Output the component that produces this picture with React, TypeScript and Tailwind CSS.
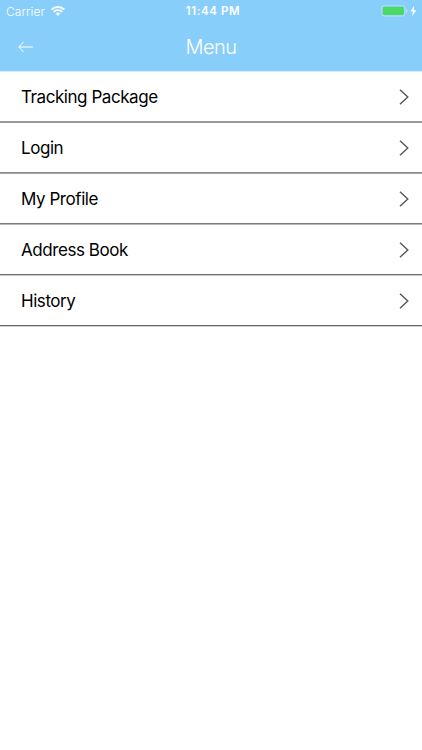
type MenuItem = {
  label: string
  lineClass: string
}

const MENU_ITEMS: MenuItem[] = [
  { label: 'Tracking Package', lineClass: 'border-[#999] shadow-[0_1px_0_#999]' },
  { label: 'Login', lineClass: 'border-[#8c8c8c] shadow-[0_1px_0_#a6a6a6]' },
  { label: 'My Profile', lineClass: 'border-[#7c7c7c] shadow-[0_1px_0_#b8b8b8]' },
  { label: 'Address Book', lineClass: 'border-[#707070] shadow-[0_1px_0_#c8c8c8]' },
  { label: 'History', lineClass: 'border-[#666] shadow-[0_1px_0_#d2d2d2]' }
]

function WifiIcon() {
  return (
    <svg className="ml-[6px] h-[10px] w-[14px]" viewBox="0 0 14 10" fill="none" stroke="white">
      <path d="M.7 3.6a9.2 9.2 0 0 1 12.6 0" strokeWidth="2" />
      <path d="M2.8 5.9a6 6 0 0 1 8.4 0" strokeWidth="1.7" />
      <path d="M4.7 7.6a3.4 3.4 0 0 1 4.6 0L7 9.9Z" fill="white" stroke="none" />
    </svg>
  )
}

function Battery() {
  return (
    <svg className="h-[12px] w-[37px]" viewBox="0 0 37 12">
      <rect x="0.8" y="0.8" width="23" height="10.2" rx="2.4" fill="none" stroke="white" strokeOpacity="0.4" />
      <rect x="1.8" y="1.8" width="21.2" height="8.2" rx="1.2" fill="#4cd964" />
      <path d="M25 4v4c1-.3 1.5-1.1 1.5-2S26 4.3 25 4Z" fill="white" fillOpacity="0.4" />
      <path d="M33.2.8 29.5 6.6H32l-1 4.3 4.5-5.7h-2.8Z" fill="white" />
    </svg>
  )
}

function StatusBar() {
  return (
    <div className="grid h-[22px] grid-cols-3 items-center text-white">
      <div className="flex items-center pl-[6px]">
        <span className="pt-px text-[12px] leading-none font-light tracking-[0.1px]">Carrier</span>
        <WifiIcon />
      </div>
      <span className="pt-[2px] pl-[4px] text-center text-[11.5px] leading-none font-semibold tracking-[0.6px] whitespace-nowrap">
        11:44 PM
      </span>
      <div className="flex justify-end pr-[4px]">
        <Battery />
      </div>
    </div>
  )
}

export default function App() {
  return (
    <div className="min-h-[750px] w-full bg-white font-['Inter',sans-serif] text-black">
      <header className="h-[71px] bg-[#87cefa] shadow-[0_1px_0_#d5eefd]">
        <StatusBar />
        <div className="grid h-[49px] grid-cols-3 items-center text-white">
          <button aria-label="Back" className="ml-[18px] w-fit">
            <svg className="h-[12px] w-[15px]" viewBox="0 0 15 12" fill="none" stroke="white" strokeWidth="1">
              <path d="M5.7.8.8 6l4.9 5.2M.8 6h14" />
            </svg>
          </button>
          <h1 className="text-center text-[20px] leading-none font-light tracking-[-0.6px]">Menu</h1>
        </div>
      </header>

      <ul>
        {MENU_ITEMS.map(({ label, lineClass }) => (
          <li
            key={label}
            className={`flex h-[51px] items-center justify-between border-b pt-[2px] pr-[13px] pl-[21px] ${lineClass}`}
          >
            <span className="pt-[2px] text-[17px] tracking-[-0.44px]">{label}</span>
            <svg className="h-[16px] w-[10px]" viewBox="0 0 10 16" fill="none" stroke="#555" strokeWidth="1.4">
              <path d="M1 .8 8.8 8 1 15.2" />
            </svg>
          </li>
        ))}
      </ul>
    </div>
  )
}
